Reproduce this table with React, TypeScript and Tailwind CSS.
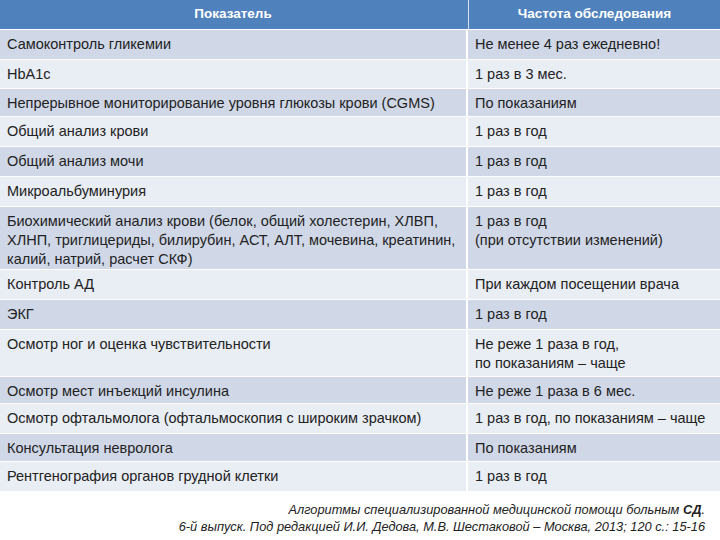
const rows: { h: string; left: string[]; right: string[]; dark: boolean }[] = [
  { h: "h-[29px]", left: ["Самоконтроль гликемии"], right: ["Не менее 4 раз ежедневно!"], dark: true },
  { h: "h-[28px]", left: ["HbA1c"], right: ["1 раз в 3 мес."], dark: false },
  { h: "h-[27px]", left: ["Непрерывное мониторирование уровня глюкозы крови (CGMS)"], right: ["По показаниям"], dark: true },
  { h: "h-[29px]", left: ["Общий анализ крови"], right: ["1 раз в год"], dark: false },
  { h: "h-[29px]", left: ["Общий анализ мочи"], right: ["1 раз в год"], dark: true },
  { h: "h-[29px]", left: ["Микроальбуминурия"], right: ["1 раз в год"], dark: false },
  {
    h: "h-[62px]",
    left: [
      "Биохимический анализ крови (белок, общий холестерин, ХЛВП,",
      "ХЛНП, триглицериды, билирубин, АСТ, АЛТ, мочевина, креатинин,",
      "калий, натрий, расчет СКФ)",
    ],
    right: ["1 раз в год", "(при отсутствии изменений)"],
    dark: true,
  },
  { h: "h-[29px]", left: ["Контроль АД"], right: ["При каждом посещении врача"], dark: false },
  { h: "h-[29px]", left: ["ЭКГ"], right: ["1 раз в год"], dark: true },
  { h: "h-[46px]", left: ["Осмотр ног и оценка чувствительности"], right: ["Не реже 1 раза в год,", "по показаниям – чаще"], dark: false },
  { h: "h-[26px]", left: ["Осмотр мест инъекций инсулина"], right: ["Не реже 1 раза в 6 мес."], dark: true },
  { h: "h-[29px]", left: ["Осмотр офтальмолога (офтальмоскопия с широким зрачком)"], right: ["1 раз в год, по показаниям – чаще"], dark: false },
  { h: "h-[27px]", left: ["Консультация невролога"], right: ["По показаниям"], dark: true },
  { h: "h-[29px]", left: ["Рентгенография органов грудной клетки"], right: ["1 раз в год"], dark: false },
];

export default function App() {
  return (
    <div className="w-[720px] h-[540px] bg-white overflow-hidden font-['Liberation_Sans',sans-serif] text-[#222]">
      <div className="flex flex-col gap-px">
        <div className="flex gap-[2px] h-[29px] bg-[#4f81bd]">
          <div className="w-[466px] flex items-center justify-center text-white font-bold text-[13.5px]">
            Показатель
          </div>
          <div className="flex-1 flex items-center justify-center text-white font-bold text-[13.5px] border-l border-[#d6e0ee]">
            Частота обследования
          </div>
        </div>
        {rows.map((r, i) => (
          <div key={i} className={`flex gap-[2px] ${r.h}`}>
            <div
              className={`w-[466px] pl-[7px] pt-[5px] text-[14.5px] leading-[19px] ${
                r.dark ? "bg-[#d0d8e8]" : "bg-[#e9edf4]"
              }`}
            >
              {r.left.map((t, j) => (
                <div key={j} className="whitespace-nowrap">
                  {t}
                </div>
              ))}
            </div>
            <div
              className={`flex-1 pl-[7px] pt-[5px] text-[14.5px] leading-[19px] ${
                r.dark ? "bg-[#d0d8e8]" : "bg-[#e9edf4]"
              }`}
            >
              {r.right.map((t, j) => (
                <div key={j} className="whitespace-nowrap">
                  {t}
                </div>
              ))}
            </div>
          </div>
        ))}
      </div>
      <div className="pt-[10px] pr-[15px] text-right italic text-[12.8px] leading-[17px] text-[#222]">
        <div>
          Алгоритмы специализированной медицинской помощи больным <span className="font-bold">СД</span>.
        </div>
        <div>6-й выпуск. Под редакцией И.И. Дедова, М.В. Шестаковой – Москва, 2013; 120 с.: 15-16</div>
      </div>
    </div>
  );
}
